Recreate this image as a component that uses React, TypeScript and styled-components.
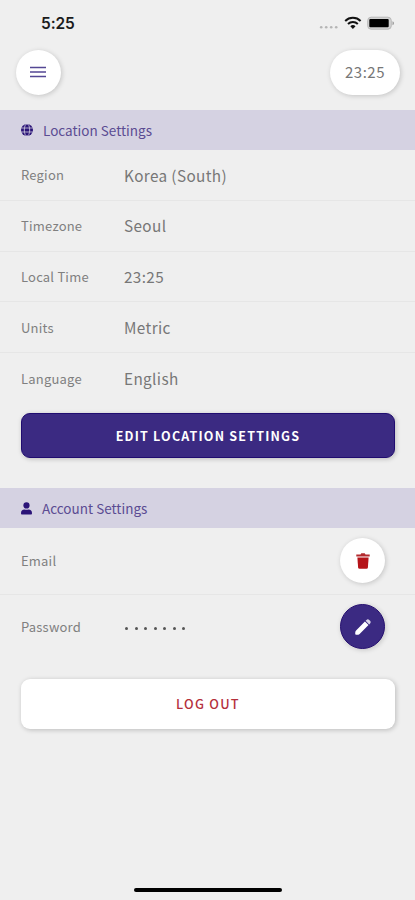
import React from 'react';
import styled, { createGlobalStyle } from 'styled-components';

const GlobalStyle = createGlobalStyle`
  * { box-sizing: border-box; }
  body {
    margin: 0;
    background: #efefef;
    font-family: "Noto Sans CJK SC", "Noto Sans", sans-serif;
  }
  button { font-family: inherit; border: 0; padding: 0; margin: 0; }
`;

const Screen = styled.div`
  display: flex;
  flex-direction: column;
  width: 415px;
  height: 900px;
  overflow: hidden;
  background: #efefef;
  color: #777;
`;

const StatusBar = styled.div`
  display: flex;
  justify-content: space-between;
  align-items: center;
  height: 47px;
  padding: 0 20px 0 41px;
`;

const Clock = styled.span`
  font: 600 15.5px/20px Inter, sans-serif;
  letter-spacing: -0.1px;
  color: #1b1b1b;
`;

const StatusIcons = styled.svg`
  display: block;
  width: 76px;
  height: 16px;
`;

const TopBar = styled.header`
  display: flex;
  justify-content: space-between;
  height: 63px;
  padding: 2.5px 15px 0 15.5px;
`;

const RoundButton = styled.button<{ $filled?: boolean }>`
  display: flex;
  align-items: center;
  justify-content: center;
  width: 45px;
  height: 45px;
  border-radius: 50%;
  background: ${(p) => (p.$filled ? '#3b2a82' : '#fff')};
  border: ${(p) => (p.$filled ? '1px solid #261070' : '0')};
  box-shadow: 1px 1px 5px rgba(0, 0, 0, 0.18);
`;

const TimePill = styled.div`
  display: flex;
  align-items: center;
  justify-content: center;
  width: 70px;
  height: 45px;
  border-radius: 23px;
  background: #fff;
  box-shadow: 1px 1px 5px rgba(0, 0, 0, 0.18);
  font-size: 15px;
  line-height: 20px;
  letter-spacing: 0.5px;
  color: #777;
`;

const SectionTitle = styled.h2<{ $gap: number }>`
  display: flex;
  align-items: center;
  gap: ${(p) => p.$gap}px;
  height: 40px;
  margin: 0;
  padding: 0 21px;
  background: #d5d2e2;
  font-size: 13.5px;
  line-height: 20px;
  font-weight: 400;
  letter-spacing: 0.01px;
  color: #5b4c93;
`;

const Row = styled.div<{ $height: number; $last?: boolean }>`
  display: grid;
  grid-template-columns: 103px 1fr auto;
  align-items: center;
  height: ${(p) => p.$height}px;
  padding: 0 30px 0 21px;
  border-bottom: ${(p) => (p.$last ? '0' : '1px solid #e6e6e6')};
`;

const Label = styled.span`
  padding-top: 1px;
  font-size: 13px;
  line-height: 20px;
  letter-spacing: 0.2px;
  color: #808080;
`;

const Value = styled.span`
  padding-bottom: 0.5px;
  font-size: 15.3px;
  line-height: 22px;
  letter-spacing: 0.38px;
  color: #777;
`;

const Dots = styled.div`
  display: flex;
  gap: 6.55px;
  padding: 3px 0 0 1px;
`;

const Dot = styled.i`
  width: 3px;
  height: 3px;
  border-radius: 50%;
  background: #555;
`;

const WideButton = styled.button<{ $primary?: boolean }>`
  flex: none;
  height: ${(p) => (p.$primary ? 45 : 50)}px;
  margin: ${(p) => (p.$primary ? '10px 20px 30px 21px' : '20px 20px 0 21px')};
  padding-top: ${(p) => (p.$primary ? 1 : 0)}px;
  border-radius: 9px;
  border: ${(p) => (p.$primary ? '1px solid #200c70' : '0')};
  background: ${(p) => (p.$primary ? '#3b2a82' : '#fff')};
  color: ${(p) => (p.$primary ? '#fff' : '#b5303c')};
  font-size: ${(p) => (p.$primary ? 12.5 : 12.8)}px;
  line-height: 20px;
  font-weight: ${(p) => (p.$primary ? 700 : 500)};
  letter-spacing: ${(p) => (p.$primary ? 1.2 : 1.25)}px;
  box-shadow: 1px 1px 5px rgba(0, 0, 0, 0.22);
`;

const HomeIndicator = styled.div`
  width: 148px;
  height: 4px;
  margin: auto auto 8px 134px;
  border-radius: 2px;
  background: #000;
`;

const Glyph = styled.svg`
  display: block;
  flex: none;
`;

const StatusGlyphs = () => (
  <StatusIcons viewBox="0 0 76 16">
    <g fill="#b5b5b5">
      <circle cx="2.2" cy="11.2" r="1.3" />
      <circle cx="7.2" cy="11.2" r="1.3" />
      <circle cx="12.2" cy="11.2" r="1.3" />
      <circle cx="17.2" cy="11.2" r="1.3" />
    </g>
    <g fill="none" stroke="#111" strokeWidth="2">
      <path d="M26.2 5a11 11 0 0 1 15.4 0" />
      <path d="M29 8a7 7 0 0 1 9.8 0" />
    </g>
    <path d="M31.3 10.3a3.7 3.7 0 0 1 5.2 0l-2.6 2.7z" fill="#111" />
    <rect x="48.7" y="1.2" width="23.6" height="12" rx="3.4" fill="#d2d2d2" stroke="#b8b8b8" />
    <rect x="50.3" y="3.1" width="19.4" height="8.2" rx="1" fill="#000" />
    <path d="M73.5 5.2c2 .7 2 3.3 0 4z" fill="#999" />
  </StatusIcons>
);

const MenuGlyph = () => (
  <Glyph width="16" height="12" viewBox="0 0 16 12">
    <path d="M0 1.5h16M0 6h16M0 10.5h16" stroke="#544794" strokeWidth="1.7" />
  </Glyph>
);

const GlobeGlyph = () => (
  <Glyph width="12" height="12" viewBox="0 0 12 12">
    <circle cx="6" cy="6" r="6" fill="#2b1478" />
    <g fill="none" stroke="#d5d2e2" strokeWidth="0.8">
      <path d="M.2 4h11.6M.2 8h11.6" />
      <ellipse cx="6" cy="6" rx="2.7" ry="6.2" />
    </g>
  </Glyph>
);

const PersonGlyph = () => (
  <Glyph width="12" height="13" viewBox="0 0 12 13">
    <circle cx="5.5" cy="3.4" r="3.1" fill="#2b1478" />
    <path d="M0 11.2c0-2.6 1.3-3.8 3.5-3.8 1.3.5 2.7.5 4 0 2.2 0 3.5 1.2 3.5 3.8 0 .8-.4 1.4-1.1 1.4H1.1c-.7 0-1.1-.6-1.1-1.4z" fill="#2b1478" />
  </Glyph>
);

const TrashGlyph = () => (
  <Glyph width="14" height="16" viewBox="0 0 14 16">
    <path d="M.3 1.5h4.2l.8-1.2h3.4l.8 1.2h4.2v1.9H.3z" fill="#b32a2e" />
    <path d="M1.4 4.6h11.2l-.7 9.9c-.1.8-.6 1.2-1.3 1.2H3.4c-.7 0-1.2-.4-1.3-1.2z" fill="#b51419" />
  </Glyph>
);

const PencilGlyph = () => (
  <Glyph width="18" height="18" viewBox="0 0 18 18">
    <path d="M10.9 3.5l3.6 3.6-8.9 8.8c-.8.7-1.8.9-3.1.9-.9 0-1.3-.4-1.3-1.3 0-1.3.2-2.4.9-3.1z" fill="#fff" />
    <path d="M11.6 2.8l.9-.9c.8-.8 1.9-.8 2.7 0l.9.9c.8.8.8 1.9 0 2.7l-.9.9z" fill="#dcd7ea" />
  </Glyph>
);

const location = [
  ['Region', 'Korea (South)'],
  ['Timezone', 'Seoul'],
  ['Local Time', '23:25'],
  ['Units', 'Metric'],
  ['Language', 'English'],
];

export default function App() {
  return (
    <>
      <GlobalStyle />
      <Screen>
        <StatusBar>
          <Clock>5:25</Clock>
          <StatusGlyphs />
        </StatusBar>
        <TopBar>
          <RoundButton aria-label="Menu"><MenuGlyph /></RoundButton>
          <TimePill>23:25</TimePill>
        </TopBar>
        <SectionTitle $gap={10}><GlobeGlyph />Location Settings</SectionTitle>
        {location.map(([label, value], i) => (
          <Row key={label} $height={i === location.length - 1 ? 50 : 50.75} $last={i === location.length - 1}>
            <Label>{label}</Label>
            <Value>{value}</Value>
          </Row>
        ))}
        <WideButton $primary>EDIT LOCATION SETTINGS</WideButton>
        <SectionTitle $gap={9}><PersonGlyph />Account Settings</SectionTitle>
        <Row $height={66.5}>
          <Label>Email</Label>
          <span />
          <RoundButton aria-label="Delete email"><TrashGlyph /></RoundButton>
        </Row>
        <Row $height={64.5} $last>
          <Label>Password</Label>
          <Dots>{Array.from({ length: 7 }, (_, i) => <Dot key={i} />)}</Dots>
          <RoundButton $filled aria-label="Edit password"><PencilGlyph /></RoundButton>
        </Row>
        <WideButton>LOG OUT</WideButton>
        <HomeIndicator />
      </Screen>
    </>
  );
}
